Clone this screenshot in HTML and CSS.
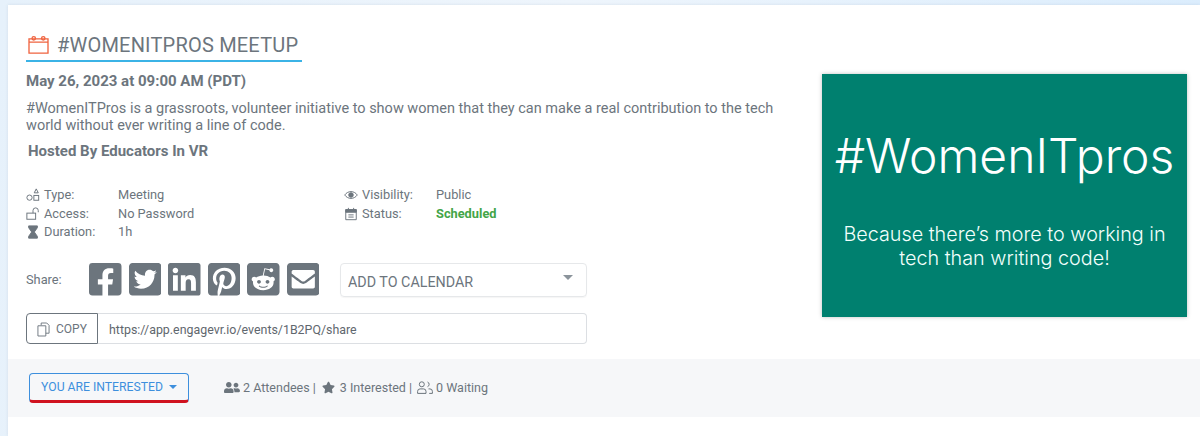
FILE: index.html
```html
<!DOCTYPE html>
<html lang="en">
<head>
<meta charset="utf-8">
<title>#WomenITPros Meetup</title>
<link rel="stylesheet" href="styles.css">
</head>
<body>
<main class="card">
  <section class="top">
    <div class="details">
      <h1 class="title">
        <svg class="title-icon" viewBox="0 0 22 20" aria-hidden="true"><path d="M1 4h20v15H1zM1 7.500h20"/><circle cx="6" cy="3.500" r="1.800"/><circle cx="16" cy="3.500" r="1.800"/></svg>
        <span>#WomenITPros Meetup</span>
      </h1>
      <p class="date">May 26, 2023 at 09:00 AM (PDT)</p>
      <p class="desc">#WomenITPros is a grassroots, volunteer initiative to show women that they can make a real contribution to the tech world without ever writing a line of code.</p>
      <p class="host">Hosted By Educators In VR</p>
      <div class="meta">
        <dl class="meta-col">
          <dt><svg class="mi" viewBox="0 0 16 16"><circle cx="4" cy="11" r="3"/><rect x="9" y="8.500" width="5.500" height="5.500"/><path d="M11.700 1 14 5.500H9.400z"/></svg>Type:</dt><dd>Meeting</dd>
          <dt><svg class="mi" viewBox="0 0 16 16"><rect x="1" y="7" width="10" height="7"/><path d="M8 7V4a3 3 0 0 1 6 0v2"/></svg>Access:</dt><dd>No Password</dd>
          <dt><svg class="mi" viewBox="0 0 16 16"><path class="solid" d="M3 1h10v2l-3.500 5L13 13v2H3v-2l3.500-5L3 3z"/></svg>Duration:</dt><dd>1h</dd>
        </dl>
        <dl class="meta-col second">
          <dt><svg class="mi" viewBox="0 0 16 16"><path d="M.8 8C4.500 2.800 11.500 2.800 15.200 8 11.500 13.200 4.500 13.200.8 8z"/><circle class="solid" cx="8" cy="8" r="2.600"/></svg>Visibility:</dt><dd>Public</dd>
          <dt><svg class="mi" viewBox="0 0 16 16"><path d="M2 3h12v11.500H2z"/><path class="solid" d="M2 3h12v3H2z"/><path d="M5 1v3M11 1v3M5 9h6M5 11.500h6"/></svg>Status:</dt><dd class="ok">Scheduled</dd>
        </dl>
      </div>
      <div class="share-row">
        <span class="share-label">Share:</span>
        <div class="socials">
          <svg class="so" viewBox="0 32 448 448"><path d="M400 32H48A48 48 0 0 0 0 80v352a48 48 0 0 0 48 48h137.250V327.690h-63V256h63v-54.640c0-62.150 37-96.480 93.670-96.480 27.140 0 55.520 4.840 55.520 4.840v61h-31.270c-30.810 0-40.420 19.120-40.420 38.730V256h68.780l-11 71.690h-57.780V480H400a48 48 0 0 0 48-48V80a48 48 0 0 0-48-48z"/></svg>
          <svg class="so" viewBox="0 32 448 448"><path d="M400 32H48C21.500 32 0 53.500 0 80v352c0 26.500 21.500 48 48 48h352c26.500 0 48-21.500 48-48V80c0-26.500-21.500-48-48-48zm-48.900 158.800c.2 2.800.2 5.700.2 8.500 0 86.700-66 186.600-186.600 186.600-37.200 0-71.700-10.800-100.700-29.400 5.300.6 10.400.8 15.800.8 30.700 0 58.900-10.400 81.400-28-28.800-.6-53-19.500-61.300-45.500 10.100 1.500 19.200 1.500 29.600-1.200-30-6.100-52.500-32.500-52.500-64.400v-.8c8.700 4.900 18.900 7.900 29.600 8.300a65.447 65.447 0 0 1-29.200-54.600c0-12.200 3.200-23.400 8.900-33.100 32.300 39.800 80.800 65.800 135.200 68.600-9.300-44.500 24-80.600 64-80.600 18.900 0 35.900 7.900 47.900 20.700 14.800-2.800 29-8.300 41.600-15.800-4.900 15.200-15.200 28-28.800 36.100 13.200-1.400 26-5.100 37.800-10.200-8.900 13.100-20.100 24.700-32.900 34z"/></svg>
          <svg class="so" viewBox="0 32 448 448"><path d="M416 32H31.900C14.300 32 0 46.500 0 64.300v383.400C0 465.500 14.300 480 31.900 480H416c17.600 0 32-14.500 32-32.300V64.300c0-17.800-14.400-32.300-32-32.300zM135.400 416H69V202.200h66.500V416zm-33.200-243c-21.300 0-38.500-17.300-38.500-38.500S80.900 96 102.200 96c21.200 0 38.500 17.300 38.500 38.500 0 21.300-17.200 38.500-38.500 38.500zm282.100 243h-66.400V312c0-24.800-.5-56.700-34.500-56.700-34.600 0-39.900 27-39.900 54.900V416h-66.400V202.200h63.700v29.200h.9c8.900-16.800 30.600-34.500 62.900-34.500 67.200 0 79.700 44.300 79.700 101.900V416z"/></svg>
          <svg class="so" viewBox="0 32 448 448"><path d="M448 80v352c0 26.500-21.500 48-48 48H154.400c9.800-16.400 22.400-40 27.400-59.300 3-11.500 15.300-58.400 15.300-58.400 8 15.300 31.400 28.200 56.300 28.200 74.100 0 127.400-68.100 127.400-152.700 0-81.100-66.200-141.800-151.400-141.800-106 0-162.200 71.100-162.200 148.600 0 36 19.200 80.800 49.800 95.100 4.700 2.200 7.100 1.200 8.200-3.300.8-3.400 5-20.100 6.800-27.800.6-2.500.3-4.600-1.700-7-10.100-12.300-18.300-34.900-18.300-56 0-54.200 41-106.600 110.900-106.600 60.300 0 102.600 41.100 102.600 99.900 0 66.400-33.500 112.400-77.200 112.400-24.100 0-42.100-19.900-36.400-44.400 6.900-29.200 20.300-60.700 20.300-81.800 0-53-75.500-45.700-75.500 25 0 21.700 7.300 36.500 7.300 36.500-31.400 132.800-36.100 134.500-29.600 192.600l2.200.8H48c-26.500 0-48-21.500-48-48V80c0-26.500 21.500-48 48-48h352c26.500 0 48 21.500 48 48z"/></svg>
          <svg class="so" viewBox="0 32 448 448"><path d="M283.200 345.500c2.700 2.700 2.700 6.800 0 9.200-24.500 24.500-93.800 24.600-118.400 0-2.700-2.400-2.700-6.500 0-9.200 2.400-2.400 6.500-2.400 8.900 0 18.700 19.200 81 19.600 100.500 0 2.400-2.300 6.600-2.300 9 0zm-91.300-53.800c0-14.900-11.900-26.800-26.500-26.800-14.900 0-26.800 11.900-26.800 26.800 0 14.600 11.900 26.500 26.800 26.500 14.600 0 26.500-11.900 26.500-26.500zm90.700-26.800c-14.600 0-26.500 11.900-26.500 26.800 0 14.600 11.900 26.500 26.500 26.500 14.900 0 26.800-11.900 26.800-26.500 0-14.900-11.900-26.800-26.800-26.800zM448 80v352c0 26.500-21.500 48-48 48H48c-26.500 0-48-21.500-48-48V80c0-26.500 21.500-48 48-48h352c26.500 0 48 21.500 48 48zm-99.700 140.600c-10.100 0-19 4.200-25.600 10.700-24.100-16.700-56.500-27.400-92.500-28.600l18.700-84.200 59.500 13.400c0 14.600 11.900 26.500 26.500 26.500 14.900 0 26.800-12.200 26.800-26.800 0-14.600-11.900-26.800-26.800-26.800-10.400 0-19.300 6.200-23.800 14.900l-65.700-14.600c-3.300-.9-6.500 1.500-7.400 4.800l-20.500 92.800c-35.700 1.500-67.800 12.200-91.900 28.900-6.500-6.800-15.800-11-25.900-11-37.500 0-49.800 50.400-15.500 67.500-1.200 5.400-1.800 11-1.800 16.700 0 56.500 63.700 102.300 141.900 102.300 78.500 0 142.200-45.800 142.200-102.300 0-5.700-.6-11.600-2.100-17 33.600-17.200 21.200-67.200-16.100-67.300z"/></svg>
          <svg class="so" viewBox="0 32 448 448"><path d="M400 32H48C21.490 32 0 53.490 0 80v352c0 26.510 21.490 48 48 48h352c26.510 0 48-21.490 48-48V80c0-26.510-21.490-48-48-48zM178.117 262.104C87.429 196.287 88.353 196.121 64 177.167V152c0-13.255 10.745-24 24-24h272c13.255 0 24 10.745 24 24v25.167c-24.371 18.969-23.434 19.124-114.117 84.938-10.500 7.655-31.392 26.120-45.883 25.894-14.503.218-35.367-18.227-45.883-25.895zM384 217.775V360c0 13.255-10.745 24-24 24H88c-13.255 0-24-10.745-24-24V217.775c13.958 10.794 33.329 25.236 95.303 70.214 14.162 10.341 37.975 32.145 64.694 32.010 26.887.134 51.037-22.041 64.720-32.025 61.958-44.965 81.325-59.406 95.283-70.199z"/></svg>
        </div>
        <div class="calendar"><span>ADD TO CALENDAR</span><i class="caret"></i></div>
      </div>
      <div class="copy-row">
        <button class="copy" type="button"><svg class="copy-icon" viewBox="0 0 14 16"><path d="M4.500 3.500V1h6L13 3.500V12H9.500M1 4h8.500v11H1z"/></svg>COPY</button>
        <div class="url">https://app.engagevr.io/events/1B2PQ/share</div>
      </div>
    </div>
    <div class="poster">
      <div class="poster-title">#WomenITpros</div>
      <div class="poster-sub">Because there’s more to working in tech than writing code!</div>
    </div>
  </section>
  <footer class="bar">
    <button class="interest" type="button">YOU ARE INTERESTED<i class="caret blue"></i></button>
    <div class="counts">
      <svg class="ci" viewBox="0 0 640 512"><path d="M192 256c61.900 0 112-50.100 112-112S253.900 32 192 32 80 82.100 80 144s50.100 112 112 112zm76.800 32h-8.300c-20.800 10-43.900 16-68.500 16s-47.600-6-68.500-16h-8.300C51.600 288 0 339.600 0 403.200V432c0 26.500 21.500 48 48 48h288c26.500 0 48-21.500 48-48v-28.800c0-63.600-51.600-115.200-115.200-115.200zM480 256c53 0 96-43 96-96s-43-96-96-96-96 43-96 96 43 96 96 96zm48 32h-3.800c-13.900 4.800-28.600 8-44.200 8s-30.300-3.200-44.200-8H432c-20.400 0-39.200 5.900-55.700 15.400 24.400 26.300 39.700 61.200 39.700 99.800v38.400c0 2.200-.5 4.300-.6 6.400H592c26.500 0 48-21.500 48-48 0-61.900-50.100-112-112-112z"/></svg>
      <span>2 Attendees |</span>
      <svg class="ci star" viewBox="0 0 576 512"><path d="M259.300 17.800L194 150.200 47.900 171.500c-26.200 3.800-36.700 36.100-17.700 54.600l105.700 103-25 145.500c-4.500 26.300 23.200 46 46.400 33.700L288 439.600l130.700 68.700c23.200 12.200 50.900-7.400 46.400-33.700l-25-145.500 105.700-103c19-18.500 8.500-50.800-17.700-54.600L382 150.200 316.700 17.800c-11.700-23.600-45.600-23.900-57.400 0z"/></svg>
      <span>3 Interested |</span>
      <svg class="ci outline" viewBox="0 0 16 13"><circle cx="4.800" cy="3.300" r="2.500"/><path d="M.6 12.400v-2a2.500 2.500 0 0 1 2.500-2.500h3.400a2.500 2.500 0 0 1 2.500 2.500v2zM10.500 1a2.500 2.500 0 0 1 0 4.700M11.500 7.900h1.400a2.500 2.500 0 0 1 2.500 2.500v2h-3.200"/></svg>
      <span>0 Waiting</span>
    </div>
  </footer>
</main>
</body>
</html>
```

FILE: styles.css
```css
* { box-sizing: border-box; }
html, body { height: 100%; }
body {
  margin: 0;
  padding: 5px 0 0 8px;
  overflow: hidden;
  background: linear-gradient(100deg, #e6f1fb 0%, #eef5fc 45%, #d9ecfd 100%);
  font-family: Roboto, "Liberation Sans", sans-serif;
  font-size: 12.800px;
  color: #6c757d;
}
.card {
  background: #fff;
  height: 431px;
  box-shadow: 0 0 3px rgba(60, 80, 110, .12);
}
.top {
  display: flex;
  align-items: flex-start;
  height: 354px;
  padding: 26px 13px 0 18px;
}
.details { width: 775px; flex: none; }
.title {
  display: flex;
  align-items: center;
  gap: 8px;
  width: 276px;
  height: 31px;
  margin: 0;
  padding: 0 0 2px 2px;
  border-bottom: 2px solid #3bb3e6;
  font-size: 20px;
  font-weight: 400;
  line-height: 24px;
  letter-spacing: .2px;
  text-transform: uppercase;
}
.title-icon { width: 21px; height: 19px; fill: none; stroke: #f0633f; stroke-width: 1.400; }
.date { margin: 11px 0 0; font-size: 15px; font-weight: 700; line-height: 17px; }
.desc { margin: 10px 0 0; font-size: 14.500px; line-height: 17px; }
.host { margin: 9px 0 0 2px; font-size: 15px; font-weight: 700; line-height: 17px; }
.meta { display: flex; margin-top: 26px; }
.meta-col {
  display: grid;
  grid-template-columns: 92px auto;
  grid-auto-rows: 18.500px;
  align-content: start;
  width: 318px;
  margin: 0;
  line-height: 18px;
}
.meta-col dt { display: flex; align-items: center; gap: 4px; }
.meta-col dd { margin: 0; }
.ok { color: #43a547; font-weight: 700; }
.mi { width: 14px; height: 14px; fill: none; stroke: #6c757d; stroke-width: 1.100; }
.mi .solid { fill: #6c757d; }
.share-row { display: flex; align-items: center; margin-top: 21px; }
.share-label { width: 63px; margin-top: -1px; }
.socials { display: flex; gap: 7px; }
.so { width: 32.500px; height: 32.500px; fill: #6c757d; display: block; }
.calendar {
  display: flex;
  align-items: center;
  justify-content: space-between;
  width: 247px;
  height: 34px;
  margin-left: 21px;
  padding: 4px 13px 0 7px;
  border: 1px solid #e6e8ea;
  border-radius: 4px;
  box-shadow: 0 1px 1px rgba(0, 0, 0, .04);
  font-size: 14.300px;
}
.caret {
  display: block;
  width: 0;
  height: 0;
  border: 5px solid transparent;
  border-top-color: #8b949b;
  border-bottom-width: 0;
  margin-top: -8px;
}
.caret.blue { border-width: 4px 4px 0; border-top-color: #3d8fdd; margin: 0 0 0 6px; }
.copy-row { display: flex; width: 561px; height: 31px; margin-top: 16px; }
.copy {
  display: flex;
  align-items: center;
  gap: 6px;
  width: 72px;
  padding: 2px 0 0 10px;
  background: #fff;
  border: 1px solid #6c757d;
  border-radius: 4px 0 0 4px;
  color: #6c757d;
  font: 400 12px Roboto, sans-serif;
}
.copy-icon { width: 13px; height: 15px; fill: none; stroke: #6c757d; stroke-width: 1; }
.url {
  flex: 1;
  padding: 1px 0 0 11px;
  border: 1px solid #dcdfe3;
  border-left: 0;
  border-radius: 0 4px 4px 0;
  font-size: 12.400px;
  line-height: 29px;
  color: #5f676e;
}
.poster {
  display: flex;
  flex: none;
  flex-direction: column;
  align-items: center;
  width: 365px;
  height: 243px;
  margin: 43px 0 0 21px;
  padding-top: 52px;
  background: #00806f;
  box-shadow: 0 0 4px rgba(0, 0, 0, .25);
  color: #fff;
  font-family: Inter, sans-serif;
  text-align: center;
}
.poster-title { font-size: 48px; font-weight: 300; line-height: 60px; }
.poster-sub { width: 340px; margin-top: 36px; font-size: 19.800px; font-weight: 300; line-height: 24px; color: #f2fffc; }
.bar {
  display: flex;
  align-items: center;
  height: 58px;
  padding-left: 21px;
  background: #f6f7f9;
}
.interest {
  display: flex;
  align-items: center;
  justify-content: center;
  width: 160px;
  height: 30px;
  padding-top: 1px;
  background: transparent;
  border: 1px solid #3d8fdd;
  border-bottom: 3px solid #d0121f;
  border-radius: 4px;
  color: #3d8fdd;
  font: 400 12.200px Roboto, sans-serif;
}
.counts { display: flex; align-items: center; gap: 3px; margin: -1px 0 0 35px; font-size: 12.500px; }
.ci { width: 16px; height: 13px; fill: #6c757d; }
.star { width: 13px; margin: 0 2px 0 3px; }
.outline { fill: none; stroke: #6c757d; stroke-width: 1; margin-left: 2px; }
```
